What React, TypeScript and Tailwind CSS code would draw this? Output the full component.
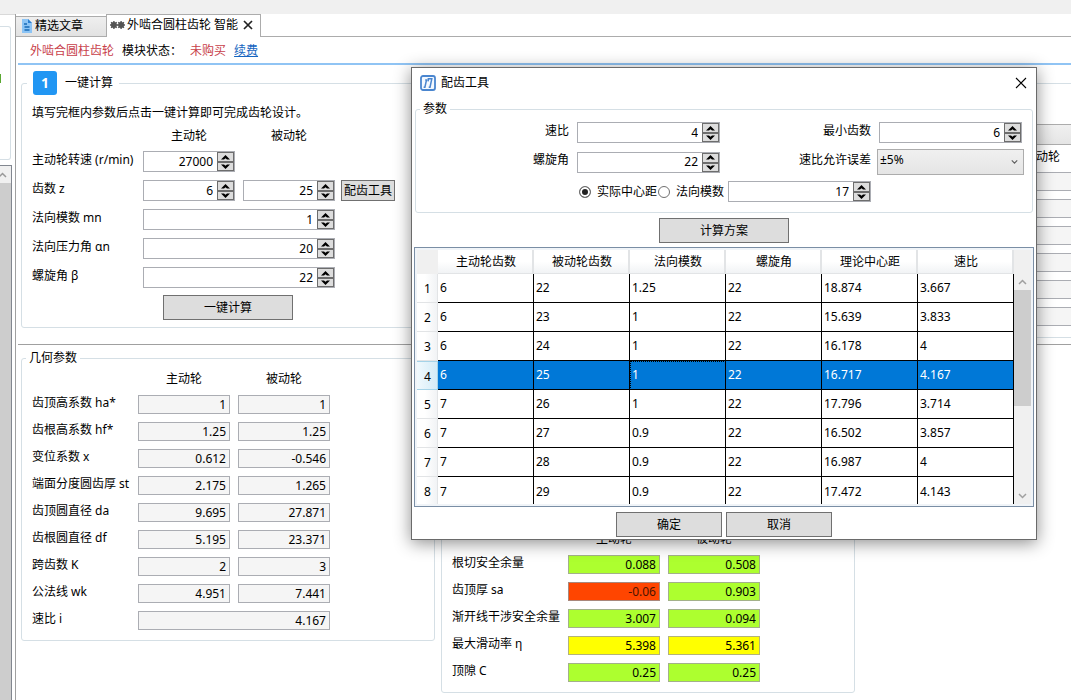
import { useState } from "react";
import { clsx } from "clsx";

interface Plan {
  z1: string;
  z2: string;
  module: string;
  helix: string;
  center: string;
  ratio: string;
}

interface ResultRow {
  label: string;
  values: string[];
  tones?: Tone[];
}

type Tone = "plain" | "good" | "warn" | "bad";

const plans: Plan[] = [
  { z1: "6", z2: "22", module: "1.25", helix: "22", center: "18.874", ratio: "3.667" },
  { z1: "6", z2: "23", module: "1", helix: "22", center: "15.639", ratio: "3.833" },
  { z1: "6", z2: "24", module: "1", helix: "22", center: "16.178", ratio: "4" },
  { z1: "6", z2: "25", module: "1", helix: "22", center: "16.717", ratio: "4.167" },
  { z1: "7", z2: "26", module: "1", helix: "22", center: "17.796", ratio: "3.714" },
  { z1: "7", z2: "27", module: "0.9", helix: "22", center: "16.502", ratio: "3.857" },
  { z1: "7", z2: "28", module: "0.9", helix: "22", center: "16.987", ratio: "4" },
  { z1: "7", z2: "29", module: "0.9", helix: "22", center: "17.472", ratio: "4.143" },
];

const planColumns: { key: keyof Plan; title: string }[] = [
  { key: "z1", title: "主动轮齿数" },
  { key: "z2", title: "被动轮齿数" },
  { key: "module", title: "法向模数" },
  { key: "helix", title: "螺旋角" },
  { key: "center", title: "理论中心距" },
  { key: "ratio", title: "速比" },
];

const geometryRows: ResultRow[] = [
  { label: "齿顶高系数 ha*", values: ["1", "1"] },
  { label: "齿根高系数 hf*", values: ["1.25", "1.25"] },
  { label: "变位系数 x", values: ["0.612", "-0.546"] },
  { label: "端面分度圆齿厚 st", values: ["2.175", "1.265"] },
  { label: "齿顶圆直径 da", values: ["9.695", "27.871"] },
  { label: "齿根圆直径 df", values: ["5.195", "23.371"] },
  { label: "跨齿数 K", values: ["2", "3"] },
  { label: "公法线 wk", values: ["4.951", "7.441"] },
  { label: "速比 i", values: ["4.167"] },
];

const safetyRows: ResultRow[] = [
  { label: "根切安全余量", values: ["0.088", "0.508"], tones: ["good", "good"] },
  { label: "齿顶厚 sa", values: ["-0.06", "0.903"], tones: ["bad", "good"] },
  { label: "渐开线干涉安全余量", values: ["3.007", "0.094"], tones: ["good", "good"] },
  { label: "最大滑动率 η", values: ["5.398", "5.361"], tones: ["warn", "warn"] },
  { label: "顶隙 C", values: ["0.25", "0.25"], tones: ["good", "good"] },
];

const toneClass: Record<Tone, string> = {
  plain: "border-[#abadb3] bg-[#f5f5f5]",
  good: "border-[#a3b18a] bg-[#adff2f]",
  warn: "border-[#b3b37a] bg-[#ffff00]",
  bad: "border-[#a8877c] bg-[#ff4500] text-[#4a1400]",
};

function SpinBox({ label, value, className }: { label: string; value: string; className: string }) {
  const [text, setText] = useState(value);
  const step = (delta: number) => setText(String(Number(text) + delta));

  return (
    <div className={clsx("flex h-[21px] border border-[#abadb3] bg-white", className)}>
      <input
        type="text"
        inputMode="decimal"
        aria-label={label}
        value={text}
        onChange={(e) => setText(e.target.value)}
        className="min-w-0 flex-1 bg-transparent pr-1 text-right outline-none"
      />
      <div className="flex w-[17px] flex-col">
        <button
          type="button"
          aria-label={`${label} +`}
          onClick={() => step(1)}
          className="flex h-[10px] items-center justify-center border border-[#6d6d6d] bg-[#dddddd]"
        >
          <svg width="9" height="5" viewBox="0 0 9 5">
            <path d="M4.5 0 9 4.6H6L4.5 3.2 3 4.6H0z" fill="#000" />
          </svg>
        </button>
        <button
          type="button"
          aria-label={`${label} -`}
          onClick={() => step(-1)}
          className="flex h-[9px] items-center justify-center border border-[#6d6d6d] bg-[#dddddd]"
        >
          <svg width="9" height="5" viewBox="0 0 9 5">
            <path d="M4.5 5 0 .4h3l1.5 1.4L6 .4h3z" fill="#000" />
          </svg>
        </button>
      </div>
    </div>
  );
}

function PushButton({ children, className }: { children: string; className: string }) {
  return (
    <button type="button" className={clsx("border border-[#707070] bg-[#dddddd]", className)}>
      {children}
    </button>
  );
}

function ResultRows({ rows, labelClass }: { rows: ResultRow[]; labelClass: string }) {
  return (
    <div className="mt-2 flex flex-col gap-2">
      {rows.map((row) => (
        <div key={row.label} className="flex items-center">
          <span className={clsx("shrink-0 pb-[3px] leading-4", labelClass)}>{row.label}</span>
          <div className="flex w-48 shrink-0 gap-2">
            {row.values.map((value, i) => (
              <input
                key={i}
                readOnly
                value={value}
                aria-label={row.label}
                className={clsx(
                  "h-[19px] min-w-0 flex-1 border pr-[3px] text-right outline-none",
                  toneClass[row.tones ? row.tones[i] : "plain"]
                )}
              />
            ))}
          </div>
        </div>
      ))}
    </div>
  );
}

function GearHeads({ className }: { className: string }) {
  return (
    <div className={clsx("flex gap-2 text-center leading-4", className)}>
      <span className="w-[92px]">主动轮</span>
      <span className="w-[92px]">被动轮</span>
    </div>
  );
}

function DocumentIcon() {
  return (
    <svg width="12" height="14" viewBox="0 0 12 14" className="shrink-0">
      <path d="M1 0h6l4 4v10H1z" fill="#8cc4f5" />
      <path d="M7 0l4 4H7z" fill="#2a7fd0" />
      <path d="M3 5h3M3.5 8h5M3.5 11h5" stroke="#1769b5" strokeWidth="1.4" />
    </svg>
  );
}

function GearsIcon() {
  return (
    <svg width="15" height="10" viewBox="0 0 15 10" className="shrink-0">
      {[3.9, 11.1].map((cx) => (
        <g key={cx} stroke="#555" strokeWidth="1.4">
          <path d={`M${cx - 3.9} 5h7.8M${cx} 1.1v7.8M${cx - 2.8} 2.2l5.6 5.6M${cx + 2.8} 2.2l-5.6 5.6`} />
          <circle cx={cx} cy="5" r="2.2" fill="#555" />
        </g>
      ))}
    </svg>
  );
}

function AppLogo() {
  return (
    <svg width="16" height="16" viewBox="0 0 16 16" className="shrink-0">
      <rect x="1" y="1" width="14" height="14" rx="2" fill="#f4f9ff" stroke="#4a86cf" strokeWidth="1.8" />
      <path
        d="M3.6 12.2h1.3L6.5 5H5.2M7.6 3.8h4.2l-1.8 8.4H8.7M8.6 3.8 8 6.4"
        fill="none"
        stroke="#4a86cf"
        strokeWidth="1.5"
      />
    </svg>
  );
}

function Chevron({ up, className }: { up?: boolean; className?: string }) {
  return (
    <svg width="9" height="6" viewBox="0 0 9 6" className={className}>
      <path d={up ? "M1 5l3.5-3.5L8 5" : "M1 1l3.5 3.5L8 1"} fill="none" stroke="currentColor" strokeWidth="1.5" />
    </svg>
  );
}

function LeftRail() {
  return (
    <div className="flex w-[15px] shrink-0 flex-col border-t border-[#d9d9d9] pt-[11px]">
      <div className="h-[134px] w-[11px] rounded-r-[3px] border border-l-0 border-[#d5dfe5] pt-[47px]">
        <div className="h-[9px] w-px bg-[#5aa832]" />
      </div>
      <div className="mt-[5px] flex w-3 flex-1 flex-col border-t border-r border-[#828790]">
        <div className="flex h-[17px] items-center bg-[#f0f0f0] text-[#999]">
          <Chevron up className="-ml-[2px]" />
        </div>
        <div className="flex-1 bg-[#cdcdcd]" />
      </div>
    </div>
  );
}

function TabBar() {
  return (
    <div className="flex h-[23px] items-end">
      <button
        type="button"
        className="flex h-[21px] w-[90px] items-center gap-[2px] border-t border-b border-[#acacac] bg-linear-to-b from-[#efefef] to-[#e2e2e2] pb-[2px] pl-[5px]"
      >
        <DocumentIcon />
        精选文章
      </button>
      <div className="flex h-[23px] w-[155px] items-center border-x border-t border-[#acacac] bg-white pb-[3px] pl-[3px]">
        <GearsIcon />
        <button type="button" className="ml-[2px] whitespace-nowrap">
          外啮合圆柱齿轮 智能
        </button>
        <button type="button" aria-label="关闭标签" className="ml-[5px]">
          <svg width="10" height="10" viewBox="0 0 10 10">
            <path d="M1 1l8 8M9 1L1 9" stroke="#222" strokeWidth="1.7" />
          </svg>
        </button>
      </div>
      <div className="h-px flex-1 bg-[#acacac]" />
    </div>
  );
}

function QuickCalc() {
  return (
    <fieldset className="w-[414px] shrink-0 rounded-[3px] border border-[#d5dfe5]">
      <legend className="ml-[5px] flex items-center gap-2 px-[6px]">
        <span className="flex size-6 items-center justify-center rounded-[3px] bg-[#2196f3] text-sm font-bold text-white">
          1
        </span>
        一键计算
      </legend>
      <div className="flex flex-col px-[10px] pt-[10px] pb-[7px]">
        <p className="leading-4">填写完框内参数后点击一键计算即可完成齿轮设计。</p>
        <GearHeads className="mt-[7px] ml-[111px]" />
        <div className="mt-[7px] flex flex-col gap-2">
          <div className="flex items-center">
            <span className="w-[111px] pb-1 leading-4">主动轮转速 (r/min)</span>
            <SpinBox label="主动轮转速" value="27000" className="w-[92px]" />
          </div>
          <div className="flex items-center">
            <span className="w-[111px] pb-1 leading-4">齿数 z</span>
            <SpinBox label="主动轮齿数" value="6" className="w-[92px]" />
            <SpinBox label="被动轮齿数" value="25" className="ml-2 w-[92px]" />
            <PushButton className="ml-[6px] h-[21px] w-[54px]">配齿工具</PushButton>
          </div>
          <div className="flex items-center">
            <span className="w-[111px] pb-1 leading-4">法向模数 mn</span>
            <SpinBox label="法向模数" value="1" className="w-48" />
          </div>
          <div className="flex items-center">
            <span className="w-[111px] pb-1 leading-4">法向压力角 αn</span>
            <SpinBox label="法向压力角" value="20" className="w-48" />
          </div>
          <div className="flex items-center">
            <span className="w-[111px] pb-1 leading-4">螺旋角 β</span>
            <SpinBox label="螺旋角" value="22" className="w-48" />
          </div>
        </div>
        <PushButton className="mt-[7px] ml-[131px] h-[25px] w-[130px]">一键计算</PushButton>
      </div>
    </fieldset>
  );
}

function StrengthPanel() {
  return (
    <fieldset className="mt-3 w-[660px] shrink-0 rounded-[3px] border border-[#d5dfe5] pt-10 pb-[11px]">
      <div className="h-[21px] border border-[#acacac] bg-linear-to-b from-[#f0f0f0] to-[#e5e5e5]" />
      <GearHeads className="mt-1 ml-[454px]" />
      <div className="mt-[7px] ml-[454px] flex w-48 flex-col gap-2">
        {["齿宽", "扭矩", "寿命", "精度", "接触", "弯曲"].map((name) => (
          <div key={name} className="flex gap-2">
            <input readOnly aria-label={`${name} 主动轮`} className="h-[19px] min-w-0 flex-1 border border-[#abadb3] bg-[#f5f5f5]" />
            <input readOnly aria-label={`${name} 被动轮`} className="h-[19px] min-w-0 flex-1 border border-[#abadb3] bg-[#f5f5f5]" />
          </div>
        ))}
      </div>
    </fieldset>
  );
}

function PlanTable() {
  const [selected, setSelected] = useState(3);

  return (
    <div className="mt-1 flex border border-[#7a8ea5] bg-[#f0f4f8] p-[2px]">
      <table className="w-[597px] table-fixed border-separate border-spacing-0 bg-white">
        <thead>
          <tr>
            <th aria-label="序号" className="h-6 w-[21px] bg-[#f0f0f0] p-0" />
            {planColumns.map((col) => (
              <th
                key={col.key}
                className="h-6 border-r-2 border-b border-[#e2e4e6] bg-linear-to-b from-white from-50% to-[#f1f3f5] p-0 pt-px pl-[2px] font-normal"
              >
                {col.title}
              </th>
            ))}
          </tr>
        </thead>
        <tbody>
          {plans.map((plan, i) => {
            const active = i === selected;
            const last = i === plans.length - 1;
            return (
              <tr
                key={plan.z2}
                onClick={() => setSelected(i)}
                className={clsx(active && "bg-[#0078d7] text-white")}
              >
                <th
                  scope="row"
                  className={clsx(
                    "border-r p-0 pt-[2px] pl-px text-center font-normal text-black",
                    last ? "h-[27px]" : "h-[29px] border-b",
                    active
                      ? "border-t border-[#a5d3e8] bg-linear-to-r from-[#f1f9fd] to-[#d3ebf7]"
                      : "border-[#e2e4e6] bg-linear-to-r from-white from-40% to-[#f1f3f5]"
                  )}
                >
                  {i + 1}
                </th>
                {planColumns.map((col) => (
                  <td
                    key={col.key}
                    className={clsx(
                      "border-r border-black p-0 pl-[2px]",
                      last ? "pt-[2px]" : "border-b",
                      active && col.key === "module" && "outline-1 -outline-offset-1 outline-dotted outline-black"
                    )}
                  >
                    {plan[col.key]}
                  </td>
                ))}
              </tr>
            );
          })}
        </tbody>
      </table>
      <div className="flex w-[17px] flex-col items-center bg-[#f0f0f0] pt-[23px] text-[#a0a0a0]">
        <div className="flex h-[17px] items-center">
          <Chevron up />
        </div>
        <div className="h-[116px] w-full bg-[#cdcdcd]" />
        <div className="mt-auto flex h-[17px] items-center">
          <Chevron />
        </div>
      </div>
    </div>
  );
}

function ToothDialog() {
  const [mode, setMode] = useState("center");
  const radioClass =
    "size-3 shrink-0 appearance-none rounded-full border border-[#707070] bg-white checked:bg-[#222] checked:shadow-[inset_0_0_0_2px_#fff]";

  return (
    <div
      role="dialog"
      aria-label="配齿工具"
      className="absolute top-[67px] left-[411px] w-[626px] border border-[#6a6a6a] bg-white px-[2px] pb-[2px] shadow-[0_3px_16px_rgba(0,0,0,0.45)]"
    >
      <div className="flex h-[29px] items-center pr-[7px] pl-[6px]">
        <AppLogo />
        <span className="ml-[5px]">配齿工具</span>
        <button type="button" aria-label="关闭" className="ml-auto">
          <svg width="12" height="12" viewBox="0 0 12 12">
            <path d="M1 1l10 10M11 1L1 11" stroke="#000" strokeWidth="1.1" />
          </svg>
        </button>
      </div>

      <fieldset className="mx-px mt-1 rounded-[3px] border border-[#d5dfe5]">
        <legend className="ml-1 px-[3px] leading-4">参数</legend>
        <div className="flex flex-col gap-[6px] pt-[5px] pb-[10px]">
          <div className="flex items-center">
            <span className="w-[153px] pb-1 text-right leading-4">速比</span>
            <SpinBox label="速比" value="4" className="ml-2 w-[143px]" />
            <span className="w-[151px] pb-1 text-right leading-4">最小齿数</span>
            <SpinBox label="最小齿数" value="6" className="ml-2 w-[143px]" />
          </div>
          <div className="flex items-center">
            <span className="w-[153px] pb-1 text-right leading-4">螺旋角</span>
            <SpinBox label="螺旋角" value="22" className="ml-2 w-[143px]" />
            <label htmlFor="tolerance" className="w-[151px] pb-1 text-right leading-4">
              速比允许误差
            </label>
            <div className="relative ml-[6px] w-[147px]">
              <select
                id="tolerance"
                defaultValue="5"
                className="block h-[26px] w-full appearance-none border border-[#acacac] bg-linear-to-b from-[#f0f0f0] to-[#e5e5e5] pb-1 pl-[2px]"
              >
                <option value="3">±3%</option>
                <option value="5">±5%</option>
                <option value="10">±10%</option>
              </select>
              <Chevron className="pointer-events-none absolute top-[10px] right-[6px] w-[7px] text-[#606060]" />
            </div>
          </div>
          <div className="flex items-center pl-[163px]">
            <label className="flex items-center gap-[6px]">
              <input
                type="radio"
                name="mode"
                checked={mode === "center"}
                onChange={() => setMode("center")}
                className={radioClass}
              />
              实际中心距
            </label>
            <label className="ml-px flex items-center gap-[6px]">
              <input
                type="radio"
                name="mode"
                checked={mode === "module"}
                onChange={() => setMode("module")}
                className={radioClass}
              />
              法向模数
            </label>
            <SpinBox label="实际中心距" value="17" className="ml-1 w-[143px]" />
          </div>
        </div>
      </fieldset>

      <PushButton className="mx-auto mt-[5px] block h-[25px] w-[130px]">计算方案</PushButton>
      <PlanTable />
      <div className="mt-[5px] flex justify-center gap-1">
        <PushButton className="h-[25px] w-[106px]">确定</PushButton>
        <PushButton className="h-[25px] w-[106px]">取消</PushButton>
      </div>
    </div>
  );
}

export default function App() {
  return (
    <div className="relative flex min-h-screen flex-col overflow-hidden bg-white font-['Noto_Sans','Noto_Sans_CJK_SC',sans-serif] text-xs text-black">
      <div className="h-[14px] shrink-0 bg-[#f0f0f0]" />
      <div className="flex flex-1">
        <LeftRail />
        <main className="min-w-0 flex-1 overflow-hidden border-l border-[#a0a0a0]">
          <TabBar />
          <div className="ml-[2px] flex h-7 items-center gap-2 border-b-2 border-[#90c4f4] pt-px pl-3">
            <span className="text-[#c8404a]">外啮合圆柱齿轮</span>
            <span>模块状态：</span>
            <span className="text-[#c8404a]">未购买</span>
            <a href="#renew" className="text-[#1565c0] underline">
              续费
            </a>
          </div>
          <div className="ml-[2px] flex items-start gap-[6px] border-b border-[#a0a0a0] pt-[6px] pb-[6px] pl-[3px]">
            <QuickCalc />
            <StrengthPanel />
          </div>
          <div className="flex items-start gap-[6px] pt-[5px] pb-2 pl-[5px]">
            <fieldset className="w-[414px] shrink-0 rounded-[3px] border border-[#d5dfe5]">
              <legend className="ml-1 px-[3px] leading-4">几何参数</legend>
              <div className="px-[10px] pt-[5px] pb-[10px]">
                <GearHeads className="ml-[106px]" />
                <ResultRows rows={geometryRows} labelClass="w-[106px]" />
              </div>
            </fieldset>
            <fieldset className="w-[414px] shrink-0 rounded-[3px] border border-[#d5dfe5]">
              <legend className="ml-1 px-[3px] leading-4">安全参数</legend>
              <div className="px-[10px] pt-[165px] pb-[10px]">
                <GearHeads className="ml-[116px]" />
                <ResultRows rows={safetyRows} labelClass="w-[116px]" />
              </div>
            </fieldset>
          </div>
        </main>
      </div>
      <ToothDialog />
    </div>
  );
}
